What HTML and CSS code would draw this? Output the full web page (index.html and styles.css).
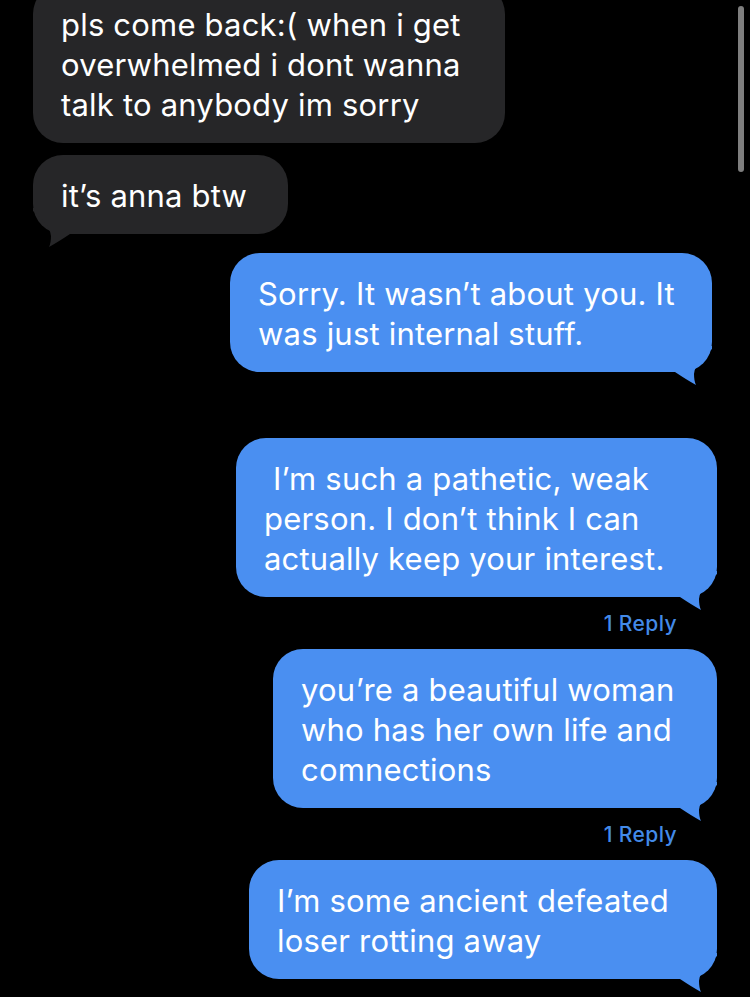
FILE: index.html
```html
<!DOCTYPE html>
<html lang="en">
  <head>
    <meta charset="UTF-8" />
    <meta name="viewport" content="width=device-width, initial-scale=1.0" />
    <title>messages</title>
    <link rel="stylesheet" href="styles.css">
  </head>
  <body>
    <div class="scroll-thumb"></div>
    <div class="thread">
      <div class="bubble recv first w-gray1">
        <p>pls come back:( when i get<br />overwhelmed i dont wanna<br />talk to anybody im sorry</p>
      </div>

      <div class="bubble recv tail w-gray2">
        <p>it’s anna btw</p>
        <svg class="tail-svg" viewBox="0 0 40 40" width="40" height="40"><path d="M40 0 L40 3 C32 10 23 18 22 28 Q22 35 24 39 Q15 34 3 26 L3 0 Z" /></svg>
      </div>

      <div class="bubble sent tail w-blue1">
        <p>Sorry. It wasn’t about you. It<br />was just internal stuff.</p>
        <svg class="tail-svg" viewBox="0 0 40 40" width="40" height="40"><path d="M40 0 L40 3 C32 10 23 18 22 28 Q22 35 24 39 Q15 34 3 26 L3 0 Z" /></svg>
      </div>

      <div class="bubble sent tail w-blue2 gap-big">
        <p>&nbsp;I’m such a pathetic, weak<br />person. I don’t think I can<br />actually keep your interest.</p>
        <svg class="tail-svg" viewBox="0 0 40 40" width="40" height="40"><path d="M40 0 L40 3 C32 10 23 18 22 28 Q22 35 24 39 Q15 34 3 26 L3 0 Z" /></svg>
      </div>
      <div class="reply">1 Reply</div>

      <div class="bubble sent tail w-blue3">
        <p>you’re a beautiful woman<br />who has her own life and<br />comnections</p>
        <svg class="tail-svg" viewBox="0 0 40 40" width="40" height="40"><path d="M40 0 L40 3 C32 10 23 18 22 28 Q22 35 24 39 Q15 34 3 26 L3 0 Z" /></svg>
      </div>
      <div class="reply">1 Reply</div>

      <div class="bubble sent tail w-blue4">
        <p>I’m some ancient defeated<br />loser rotting away</p>
        <svg class="tail-svg" viewBox="0 0 40 40" width="40" height="40"><path d="M40 0 L40 3 C32 10 23 18 22 28 Q22 35 24 39 Q15 34 3 26 L3 0 Z" /></svg>
      </div>
    </div>
  </body>
</html>
```

FILE: styles.css
```css
* {
  margin: 0;
  padding: 0;
  box-sizing: border-box;
}
html,
body {
  background-color: #000;
  overflow: hidden;
  height: 997px;
}
body {
  font-family: Inter, "Noto Sans", sans-serif;
  color: #fff;
}
.thread {
  display: flex;
  flex-direction: column;
}
.bubble {
  position: relative;
  padding: 21px 28px 18px 28px;
  border-radius: 30px;
  font-size: 31px;
  line-height: 40px;
  white-space: nowrap;
  letter-spacing: 0.2px;
}
.recv {
  align-self: flex-start;
  margin-left: 33px;
  background-color: #262628;
}
.sent {
  align-self: flex-end;
  margin-right: 33px;
  background-color: #4a8ff1;
  margin-top: 12px;
}
.first {
  margin-top: -16px;
}
.recv + .recv {
  margin-top: 12px;
}
.recv + .sent {
  margin-top: 19px;
}
.sent + .sent.gap-big {
  margin-top: 66px;
}
.w-gray1 { width: 472px; }
.w-gray2 { width: 255px; }
.w-blue1 { width: 482px; margin-right: 38px; }
.w-blue2 { width: 481px; }
.w-blue3 { width: 444px; }
.w-blue4 { width: 468px; }

.tail-svg {
  position: absolute;
  bottom: -14px;
  right: 0;
}
.sent .tail-svg path {
  fill: #4a8ff1;
}
.recv .tail-svg {
  right: auto;
  left: 0;
  transform: scaleX(-1);
}
.recv .tail-svg path {
  fill: #262628;
}

.reply {
  align-self: flex-end;
  margin-right: 73px;
  margin-top: 14px;
  margin-bottom: -1px;
  font-size: 21px;
  line-height: 26px;
  font-weight: 500;
  letter-spacing: 0.4px;
  color: #438ae8;
}
.reply + .bubble {
  margin-top: 13px;
}

.scroll-thumb {
  position: absolute;
  top: 6px;
  left: 738px;
  width: 6px;
  height: 166px;
  border-radius: 3px;
  background-color: #7e7e7e;
}
```
